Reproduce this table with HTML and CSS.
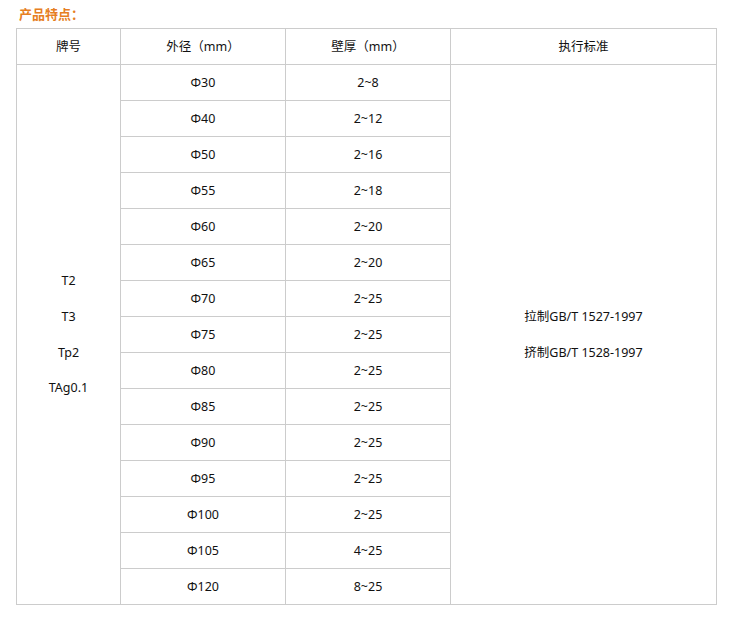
FILE: index.html
```html
<!DOCTYPE html>
<html lang="zh-CN">
<head>
<meta charset="utf-8">
<title>产品特点</title>
<link rel="stylesheet" href="styles.css">
</head>
<body>
<div class="page">
  <h3 class="title">产品特点：</h3>
  <table class="spec">
    <colgroup>
      <col class="c1"><col class="c2"><col class="c3"><col class="c4">
    </colgroup>
    <thead>
      <tr><th>牌号</th><th>外径（mm）</th><th>壁厚（mm）</th><th>执行标准</th></tr>
    </thead>
    <tbody>
      <tr>
        <td rowspan="15" class="multi"><p>T2</p><p>T3</p><p>Tp2</p><p>TAg0.1</p></td>
        <td>Φ30</td><td>2~8</td>
        <td rowspan="15" class="multi"><p>拉制GB/T 1527-1997</p><p>挤制GB/T 1528-1997</p></td>
      </tr>
      <tr><td>Φ40</td><td>2~12</td></tr>
      <tr><td>Φ50</td><td>2~16</td></tr>
      <tr><td>Φ55</td><td>2~18</td></tr>
      <tr><td>Φ60</td><td>2~20</td></tr>
      <tr><td>Φ65</td><td>2~20</td></tr>
      <tr><td>Φ70</td><td>2~25</td></tr>
      <tr><td>Φ75</td><td>2~25</td></tr>
      <tr><td>Φ80</td><td>2~25</td></tr>
      <tr><td>Φ85</td><td>2~25</td></tr>
      <tr><td>Φ90</td><td>2~25</td></tr>
      <tr><td>Φ95</td><td>2~25</td></tr>
      <tr><td>Φ100</td><td>2~25</td></tr>
      <tr><td>Φ105</td><td>4~25</td></tr>
      <tr><td>Φ120</td><td>8~25</td></tr>
    </tbody>
  </table>
</div>
</body>
</html>
```
FILE: styles.css
```css
html, body {
  margin: 0;
  padding: 0;
  background: #fff;
}
body {
  font-family: "Noto Sans", "Noto Sans CJK SC", sans-serif;
  font-size: 12.5px;
  color: #111;
}
.page {
  padding: 5px 16px 0 16px;
}
.title {
  margin: 0 0 5px 3px;
  font-size: 13px;
  line-height: 18px;
  font-weight: bold;
  color: #e67e22;
  font-family: "Noto Sans CJK SC", sans-serif;
}
.spec {
  border-collapse: collapse;
  width: 700px;
  table-layout: fixed;
}
.c1 { width: 104px; }
.c2 { width: 165px; }
.c3 { width: 165px; }
.c4 { width: 266px; }
.spec th, .spec td {
  border: 1px solid #ccc;
  height: 35px;
  padding: 0;
  text-align: center;
  vertical-align: middle;
  font-weight: normal;
  line-height: 18px;
}
.spec td.multi p {
  margin: 0;
  line-height: 35.6px;
}
```
